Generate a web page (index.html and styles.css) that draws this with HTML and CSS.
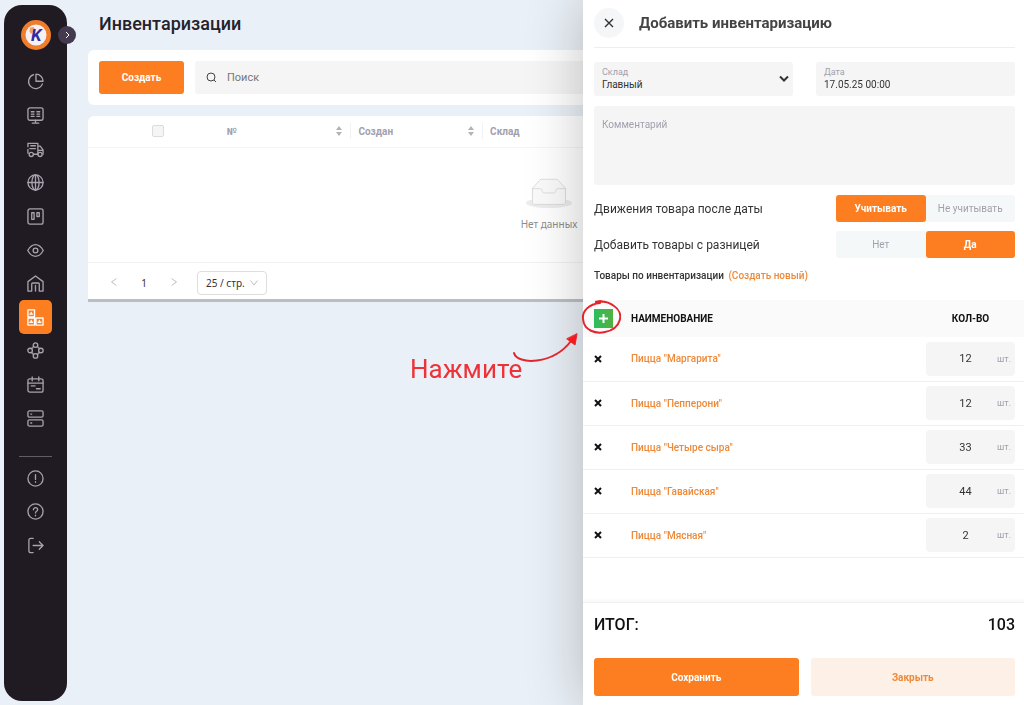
FILE: index.html
```html
<!DOCTYPE html>
<html lang="ru">

<head>
    <meta charset="UTF-8">
    <meta name="viewport" content="width=device-width, initial-scale=1.0">
    <title>Инвентаризации</title>
    <link rel="stylesheet" href="styles.css">
</head>

<body>

    <aside class="sidebar">
        <a class="logo" href="#" aria-label="Главная">
            <svg width="30" height="30" viewBox="0 0 30 30">
                <circle cx="15" cy="15" r="15" fill="#ef7d2b" />
                <circle cx="15" cy="15" r="10.500" fill="#f6f0f6" />
                <path d="M9 7.500l3.500-.5 1 1.500-1 3-2.500 2.500-1.500-2.500z" fill="#f3a061" />
                <text x="10" y="21" class="logo-letter">K</text>
            </svg>
        </a>
        <button class="sidebar-toggle" aria-label="Развернуть меню">
            <svg width="8" height="8" viewBox="0 0 8 8"><path d="M3 1l3 3-3 3" /></svg>
        </button>

        <nav class="menu">
            <a href="#" aria-label="Статистика">
                <svg viewBox="0 0 18 18"><path d="M7 1.800A7.500 7.500 0 1 0 16.300 11.500" /><path d="M9.500 1.200v7.500H17a7.500 7.500 0 0 0-7.500-7.500z" /></svg>
            </a>
            <a href="#" aria-label="Касса">
                <svg viewBox="0 0 18 18"><rect x="1" y="1" width="16" height="13" rx="2" /><path d="M9 14v3M5.500 17h7M4.500 5h3M4.500 7.500h3M4.500 10h3M10.500 5h3M10.500 7.500h3M10.500 10h3" /></svg>
            </a>
            <a href="#" aria-label="Доставка">
                <svg viewBox="0 0 18 18"><path d="M1 6V2.500h10.500V14H7M11.500 5.500h2.500l3 4V14M1 9v4M4 5h5M3 8h6M11.500 10H17" /><circle cx="4.500" cy="14.200" r="2.200" /><circle cx="13.800" cy="14.200" r="2.200" /></svg>
            </a>
            <a href="#" aria-label="Сайт">
                <svg viewBox="0 0 18 18"><circle cx="9" cy="9" r="8" /><ellipse cx="9" cy="9" rx="3.800" ry="8" /><path d="M9 1v16M1 9h16" /></svg>
            </a>
            <a href="#" aria-label="Доска">
                <svg viewBox="0 0 18 18"><rect x="1" y="1" width="16" height="16" rx="2" /><path d="M5 5h2.500v7H5zM10.500 5H13v4h-2.500z" /></svg>
            </a>
            <a href="#" aria-label="Просмотр">
                <svg viewBox="0 0 18 18"><path d="M.8 9C3 5 6 2.800 9 2.800S15 5 17.200 9C15 13 12 15.200 9 15.200S3 13 .8 9z" /><circle cx="9" cy="9" r="2.500" /></svg>
            </a>
            <a href="#" aria-label="Заведение">
                <svg viewBox="0 0 18 18"><path d="M1 17V7l8-6 8 6v10h-4V9.500a1 1 0 0 0-1-1H6a1 1 0 0 0-1 1V17zM9 11v6" /></svg>
            </a>
            <a href="#" class="active" aria-label="Склад" aria-current="page">
                <svg viewBox="0 0 18 18"><path d="M1 1h7v7.500H1zM1 9.500h7V17H1zM9.500 9.500h7.500V17H9.500zM3 5.500h3M3 14h3M11.700 14h3M4.500 3.500v2M4.500 12v2M13.200 12v2" /></svg>
            </a>
            <a href="#" aria-label="Интеграции">
                <svg viewBox="0 0 18 18"><circle cx="9" cy="3.300" r="2.400" /><circle cx="9" cy="14.700" r="2.400" /><circle cx="3.300" cy="9" r="2.400" /><circle cx="14.700" cy="9" r="2.400" /><path d="M6.800 4.500Q6.500 6.500 4.500 6.900M11.200 4.500q.3 2 2.300 2.400M6.800 13.500q-.3-2-2.300-2.400M11.200 13.500q.3-2 2.300-2.400" /></svg>
            </a>
            <a href="#" aria-label="Календарь">
                <svg viewBox="0 0 18 18"><rect x="1" y="3" width="16" height="14" rx="2" /><path d="M1 7.500h16M5.500 1v4M12.500 1v4M4.500 10.500h4M10 13.500h4" /></svg>
            </a>
            <a href="#" aria-label="Устройства">
                <svg viewBox="0 0 18 18"><rect x="1" y="1" width="16" height="6.500" rx="1.500" /><rect x="1" y="10.500" width="16" height="6.500" rx="1.500" /><path d="M4 4.300h1M4 13.800h1" /></svg>
            </a>
        </nav>

        <nav class="menu menu-bottom">
            <a href="#" aria-label="Уведомления">
                <svg viewBox="0 0 18 18"><circle cx="9" cy="9" r="8" /><path d="M9 5v5M9 12.300v.7" /></svg>
            </a>
            <a href="#" aria-label="Помощь">
                <svg viewBox="0 0 18 18"><circle cx="9" cy="9" r="8" /><path d="M6.800 7.200C6.800 4 11.500 4.300 11.300 7.200 11.200 8.800 9 8.800 9 10.500M9 12.800v.7" /></svg>
            </a>
            <a href="#" aria-label="Выход">
                <svg viewBox="0 0 18 18"><path d="M6.500 1.500H4q-2 0-2 2v11q0 2 2 2h2.500M6.500 9H17M13 5l4 4-4 4" /></svg>
            </a>
        </nav>
    </aside>

    <main class="content">
        <h1>Инвентаризации</h1>

        <div class="toolbar">
            <button class="btn btn-primary btn-create">Создать</button>
            <label class="search">
                <svg width="11" height="11" viewBox="0 0 11 11"><circle cx="5" cy="5" r="4" /><path d="M8 8l2 2" /></svg>
                <input type="text" placeholder="Поиск" aria-label="Поиск">
            </label>
        </div>

        <div class="list">
            <table class="list-table">
                <thead>
                    <tr>
                        <th class="check"><input type="checkbox" aria-label="Выбрать все"></th>
                        <th><div class="th">№ <i class="sorter"></i></div></th>
                        <th><div class="th">Создан <i class="sorter"></i></div></th>
                        <th><div class="th">Склад <i class="sorter"></i></div></th>
                        <th></th>
                        <th></th>
                        <th></th>
                    </tr>
                </thead>
                <tbody>
                    <tr>
                        <td colspan="7" class="empty">
                            <svg width="46" height="32" viewBox="0 0 64 41">
                                <ellipse cx="32" cy="33" rx="32" ry="7" fill="#ececec" stroke="none" />
                                <path d="M55 12.800L44.900 1.300C44.400.5 43.700 0 42.900 0H21.100c-.8 0-1.500.5-2 1.300L9 12.800V22h46z" />
                                <path d="M41.600 16c0-1.700 1-3 2.200-3H55v18c0 2.200-1.300 4-3 4H12c-1.700 0-3-1.800-3-4V13h11.200c1.200 0 2.200 1.300 2.200 3s1 3 2.200 3h14.800c1.200 0 2.200-1.400 2.200-3z" />
                            </svg>
                            <p>Нет данных</p>
                        </td>
                    </tr>
                </tbody>
            </table>
            <div class="pagination">
                <button aria-label="Назад"><svg width="8" height="10" viewBox="0 0 8 10"><path d="M6.500 1.500L1.500 5l5 3.500" /></svg></button>
                <button class="current">1</button>
                <button aria-label="Вперёд"><svg width="8" height="10" viewBox="0 0 8 10"><path d="M1.500 1.500l5 3.500-5 3.500" /></svg></button>
                <div class="page-size">
                    <select aria-label="Строк на странице">
                        <option>25 / стр.</option>
                    </select>
                    <svg width="10" height="8" viewBox="0 0 10 8"><path d="M1.500 1.500L5 6l3.500-4.500" /></svg>
                </div>
            </div>
        </div>
    </main>

    <section class="drawer">
        <div class="drawer-body">
            <header class="drawer-header">
                <button class="close" aria-label="Закрыть">
                    <svg width="10" height="10" viewBox="0 0 10 10"><path d="M1 1l8 8M9 1L1 9" /></svg>
                </button>
                <h2>Добавить инвентаризацию</h2>
            </header>

            <div class="fields">
                <div class="field">
                    <label for="store">Склад</label>
                    <select id="store">
                        <option>Главный</option>
                    </select>
                    <svg width="10" height="8" viewBox="0 0 10 8"><path d="M1 1.500l4 4 4-4" /></svg>
                </div>
                <div class="field">
                    <label for="date">Дата</label>
                    <input id="date" type="text" value="17.05.25 00:00">
                </div>
            </div>
            <textarea class="comment" placeholder="Комментарий" aria-label="Комментарий"></textarea>

            <div class="option">
                <span>Движения товара после даты</span>
                <div class="switch">
                    <button class="on">Учитывать</button>
                    <button>Не учитывать</button>
                </div>
            </div>
            <div class="option">
                <span>Добавить товары с разницей</span>
                <div class="switch">
                    <button>Нет</button>
                    <button class="on">Да</button>
                </div>
            </div>
            <p class="caption">Товары по инвентаризации <a href="#">(Создать новый)</a></p>
        </div>

        <div class="goods-wrap">
            <table class="goods">
                <thead>
                    <tr>
                        <th class="act">
                            <button class="add" aria-label="Добавить товар">
                                <svg width="11" height="11" viewBox="0 0 11 11"><path d="M5.500 1v9M1 5.500h9" /></svg>
                            </button>
                        </th>
                        <th class="name">НАИМЕНОВАНИЕ</th>
                        <th class="qty">КОЛ-ВО</th>
                    </tr>
                </thead>
                <tbody>
                    <tr>
                        <td class="act"><button class="remove" aria-label="Удалить"><svg width="8" height="8" viewBox="0 0 8 8"><path d="M1 1l6 6M7 1L1 7" /></svg></button></td>
                        <td><a href="#">Пицца "Маргарита"</a></td>
                        <td class="qty"><label class="count"><input type="text" value="12" aria-label="Количество"><span>шт.</span></label></td>
                    </tr>
                    <tr>
                        <td class="act"><button class="remove" aria-label="Удалить"><svg width="8" height="8" viewBox="0 0 8 8"><path d="M1 1l6 6M7 1L1 7" /></svg></button></td>
                        <td><a href="#">Пицца "Пепперони"</a></td>
                        <td class="qty"><label class="count"><input type="text" value="12" aria-label="Количество"><span>шт.</span></label></td>
                    </tr>
                    <tr>
                        <td class="act"><button class="remove" aria-label="Удалить"><svg width="8" height="8" viewBox="0 0 8 8"><path d="M1 1l6 6M7 1L1 7" /></svg></button></td>
                        <td><a href="#">Пицца "Четыре сыра"</a></td>
                        <td class="qty"><label class="count"><input type="text" value="33" aria-label="Количество"><span>шт.</span></label></td>
                    </tr>
                    <tr>
                        <td class="act"><button class="remove" aria-label="Удалить"><svg width="8" height="8" viewBox="0 0 8 8"><path d="M1 1l6 6M7 1L1 7" /></svg></button></td>
                        <td><a href="#">Пицца "Гавайская"</a></td>
                        <td class="qty"><label class="count"><input type="text" value="44" aria-label="Количество"><span>шт.</span></label></td>
                    </tr>
                    <tr>
                        <td class="act"><button class="remove" aria-label="Удалить"><svg width="8" height="8" viewBox="0 0 8 8"><path d="M1 1l6 6M7 1L1 7" /></svg></button></td>
                        <td><a href="#">Пицца "Мясная"</a></td>
                        <td class="qty"><label class="count"><input type="text" value="2" aria-label="Количество"><span>шт.</span></label></td>
                    </tr>
                </tbody>
            </table>

            <!-- hint: click the plus -->
            <svg class="hint-mark" width="212" height="86" viewBox="0 0 212 86">
                <path d="M105 54C108 66 144 66 162 42" />
                <path d="M168 35l-2 11-8-6z" fill="#f3191d" stroke-width="1" />
                <path d="M191 4C180 5 173 12 174 20c1 12 13 15 22 13 16-3 20-19 9-26-6-5-13-5-19-4l5-1 5 1" />
            </svg>
            <span class="hint-text">Нажмите</span>
        </div>

        <footer class="drawer-footer">
            <div class="total"><span>ИТОГ:</span><span>103</span></div>
            <div class="actions">
                <button class="btn btn-primary">Сохранить</button>
                <button class="btn btn-light">Закрыть</button>
            </div>
        </footer>
    </section>

</body>

</html>
```
FILE: styles.css
```css
* {
    box-sizing: border-box;
}

body {
    margin: 0;
    min-height: 100vh;
    display: flex;
    background-color: #eaf0f7;
    font-family: Roboto, sans-serif;
    font-size: 10px;
    color: #333;
}

button,
input,
select,
textarea {
    font-family: inherit;
    font-size: inherit;
    color: inherit;
    border: none;
    background: none;
    padding: 0;
    margin: 0;
    outline: none;
}

button {
    cursor: pointer;
}

select {
    appearance: none;
}

a {
    color: #ed8a3a;
    text-decoration: none;
}

svg {
    fill: none;
    stroke: currentColor;
}

/* sidebar */
.sidebar {
    position: relative;
    display: flex;
    flex-direction: column;
    align-items: center;
    flex-shrink: 0;
    width: 63px;
    margin: 5px 0 4px 4px;
    padding-top: 15px;
    background-color: #201a23;
    border-radius: 18px;
}

.logo {
    height: 30px;
}

.logo svg {
    stroke: none;
}

.logo-letter {
    font-size: 17px;
    font-weight: 700;
    font-style: italic;
    fill: #2b2f9f;
}

.sidebar-toggle {
    position: absolute;
    top: 21px;
    right: -9px;
    width: 18px;
    height: 18px;
    display: flex;
    align-items: center;
    justify-content: center;
    border-radius: 50%;
    background-color: #443a4f;
    color: #fff;
}

.menu {
    display: flex;
    flex-direction: column;
    width: 33px;
    height: 370px;
    margin-top: 15px;
}

.menu a {
    flex: 1;
    display: flex;
    align-items: center;
    justify-content: center;
    color: #a8a2ac;
    border-radius: 5px;
}

.menu a.active {
    background-color: #fc7e20;
    color: #fff;
}

.menu svg {
    width: 17px;
    height: 17px;
    stroke-width: 1.4;
    stroke-linecap: round;
    stroke-linejoin: round;
}

.menu-bottom {
    height: 106px;
    margin-top: 21px;
    padding-top: 5px;
    border-top: 1px solid #625c66;
}

/* page */
.content {
    flex: 1;
    min-width: 0;
    padding: 0 14px 0 21px;
}

h1 {
    margin: 12px 0 15px 11px;
    font-size: 18px;
    line-height: 23px;
    font-weight: 500;
    color: #24222b;
}

.toolbar {
    display: flex;
    gap: 11px;
    padding: 11px;
    background-color: #fff;
    border-radius: 6px;
}

.btn {
    flex: 1;
    height: 38px;
    border-radius: 3px;
    font-weight: 700;
}

.btn-primary {
    background-color: #fc7e20;
    color: #fff;
}

.btn-light {
    background-color: #fdf0e6;
    color: #ed8a3a;
}

.btn-create {
    flex: 0 0 85px;
    height: 33px;
}

.search {
    flex: 1;
    display: flex;
    align-items: center;
    gap: 10px;
    padding-left: 11px;
    background-color: #f5f5f5;
    border-radius: 3px;
    color: #444;
}

.search input {
    flex: 1;
    font-size: 11px;
}

.search input::placeholder {
    color: #777;
}

.list {
    margin-top: 11px;
    background-color: #fff;
    border-radius: 6px 6px 0 0;
    border-bottom: 3px solid #bcbec0;
}

.list-table {
    width: 100%;
    table-layout: fixed;
    border-collapse: collapse;
}

.list-table th {
    height: 31px;
    padding: 0;
    font-weight: 700;
    color: #a3a0ad;
    border-bottom: 1px solid #f5f5f5;
}

.list-table .check {
    padding-left: 9px;
}

.check input {
    display: block;
    appearance: none;
    width: 12px;
    height: 12px;
    margin: 0 auto;
    border: 1px solid #dcdcdc;
    border-radius: 2px;
    background-color: #f5f5f5;
}

.th {
    display: flex;
    justify-content: space-between;
    align-items: center;
    height: 16px;
    padding: 0 8px 0 7px;
    border-right: 1px solid #f2f2f2;
}

.sorter::before,
.sorter::after {
    content: '';
    display: block;
    border: 3px solid transparent;
}

.sorter::before {
    border-top: none;
    border-bottom: 4px solid #b3b3b3;
}

.sorter::after {
    margin-top: 2px;
    border-bottom: none;
    border-top: 4px solid #b3b3b3;
}

.empty {
    height: 115px;
    padding: 0;
    text-align: center;
    vertical-align: middle;
    color: #8c8c8c;
    border-bottom: 1px solid #f2f2f2;
}

.empty svg {
    display: block;
    margin: 0 auto 6px;
    fill: #fafafa;
    stroke: #d4d4d4;
}

.empty p {
    margin: 0;
    line-height: 16px;
    font-family: "Noto Sans", sans-serif;
}

.pagination {
    display: flex;
    align-items: center;
    padding: 8px 11px 4px;
    font-family: "Noto Sans", sans-serif;
}

.pagination button {
    width: 30px;
    height: 24px;
    color: #bfbfbf;
}

.pagination .current {
    color: #333;
}

.page-size {
    position: relative;
    margin-left: 8px;
    color: #bfbfbf;
}

.page-size select {
    display: block;
    width: 70px;
    height: 24px;
    padding-left: 8px;
    border: 1px solid #dedede;
    border-radius: 4px;
    color: #333;
}

.page-size svg {
    position: absolute;
    top: 8px;
    right: 8px;
    pointer-events: none;
}

/* drawer */
.drawer {
    position: fixed;
    top: 0;
    right: 0;
    bottom: 0;
    width: 43%;
    min-width: 441px;
    display: flex;
    flex-direction: column;
    background-color: #fff;
    box-shadow: 0 0 54px rgba(0, 0, 0, 0.24);
}

.drawer-body {
    padding: 8px 9px 0 11px;
}

.drawer-header {
    display: flex;
    align-items: center;
    gap: 15px;
    padding-bottom: 9px;
    border-bottom: 1px solid #eee;
}

.close {
    width: 30px;
    height: 30px;
    border-radius: 50%;
    background-color: #f5f6f8;
}

.close svg {
    display: block;
    margin: 0 auto;
    stroke-width: 1.4;
}

h2 {
    margin: 0;
    font-size: 15px;
    font-weight: 700;
    color: #444;
}

.fields {
    display: flex;
    gap: 23px;
    margin-top: 14px;
}

.field {
    position: relative;
    flex: 1;
    display: flex;
    flex-direction: column;
    justify-content: center;
    height: 34px;
    padding: 0 8px;
    background-color: #f5f5f5;
    border-radius: 3px;
}

.field label {
    font-size: 9px;
    line-height: 11px;
    color: #a3a0ad;
}

.field input,
.field select {
    width: 100%;
    height: 14px;
}

.field svg {
    position: absolute;
    top: 13px;
    right: 4px;
    stroke-width: 2;
    pointer-events: none;
}

.comment {
    display: block;
    width: 100%;
    height: 79px;
    margin: 10px 0;
    padding: 13px 8px;
    background-color: #f5f5f5;
    border-radius: 3px;
    resize: none;
}

.comment::placeholder {
    color: #a3a0ad;
}

.option {
    display: flex;
    align-items: center;
    justify-content: space-between;
    margin-bottom: 9px;
    font-size: 12px;
}

.switch {
    display: flex;
    width: 179px;
    background-color: #f5f8f8;
    border-radius: 3px;
    font-size: 10px;
}

.switch button {
    flex: 1;
    height: 27px;
    border-radius: 3px;
    color: #a3a0ad;
}

.switch .on {
    background-color: #fc7e20;
    color: #fff;
    font-weight: 700;
}

.caption {
    margin: 0 0 16px;
    line-height: 17px;
    font-weight: 500;
}

.caption a {
    margin-left: 2px;
}

.goods-wrap {
    position: relative;
    flex: 1;
}

.goods {
    width: 100%;
    border-collapse: collapse;
}

.goods th {
    height: 37px;
    padding: 0;
    background-color: #fafafa;
    font-weight: 700;
    text-align: left;
    color: #111;
}

.goods td {
    height: 44px;
    padding: 0;
    border-bottom: 1px solid #efefef;
}

.goods td a {
    font-weight: 500;
}

.goods .act {
    width: 48px;
    padding-left: 11px;
}

.goods .qty {
    width: 98px;
    padding-right: 9px;
    text-align: center;
}

.add {
    display: flex;
    align-items: center;
    justify-content: center;
    width: 19px;
    height: 19px;
    background: linear-gradient(90deg, #2ebd5c, #52b043);
    color: #fff;
}

.add svg {
    stroke-width: 2;
}

.remove {
    display: block;
    color: #111;
}

.remove svg {
    display: block;
    stroke-width: 2;
}

.count {
    display: flex;
    align-items: center;
    height: 34px;
    padding: 0 4px 0 8px;
    background-color: #f5f5f5;
    border-radius: 4px;
}

.count input {
    flex: 1;
    width: 0;
    font-size: 11px;
    text-align: center;
}

.count span {
    font-size: 9px;
    color: #a3a0ad;
}

.hint-mark {
    position: absolute;
    top: -1px;
    left: -174px;
    color: #e3242b;
    stroke-width: 2;
    stroke-linecap: round;
    pointer-events: none;
}

.hint-text {
    position: absolute;
    top: 52px;
    left: -173px;
    font-size: 26px;
    line-height: 34px;
    color: #ee3338;
}

.drawer-footer {
    padding: 12px 9px 9px 11px;
    border-top: 1px solid #f0f0f0;
    box-shadow: 0 -2px 3px rgba(0, 0, 0, 0.03);
}

.total {
    display: flex;
    justify-content: space-between;
    margin-bottom: 23px;
    font-size: 16px;
    line-height: 20px;
    font-weight: 500;
    color: #111;
}

.actions {
    display: flex;
    gap: 12px;
}
```
